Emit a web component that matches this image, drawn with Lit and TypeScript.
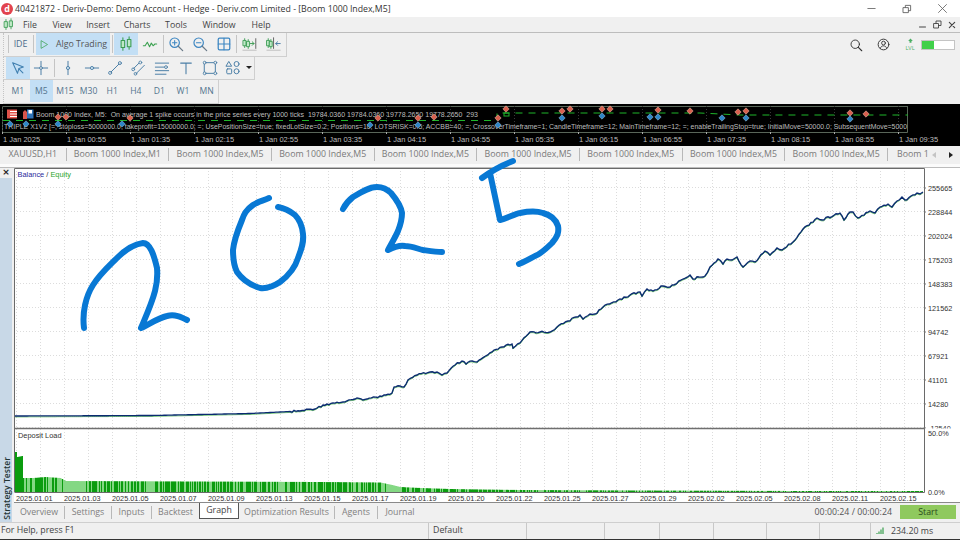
import { LitElement, html, css, svg } from "lit";
import { customElement } from "lit/decorators.js";

const BAL: number[][] = [[15,416],[150,415.5],[250,413.5],[300,411],[317,408],[323,405],[333,403],[343,402],[355,399],[367,399],[380,396],[392,393],[394,387],[400,386],[404,387],[408,380],[417,375],[430,372],[437,372],[442,375],[447,373],[455,365],[462,361],[466,364],[472,361],[477,362],[492,352],[502,347],[512,344],[513,348],[520,343],[530,332],[540,332],[550,332],[557,327],[568,321],[580,315],[583,319],[590,314],[595,314],[603,307],[618,300],[630,295],[640,292],[642,296],[647,289],[653,291],[663,286],[670,287],[683,279],[690,275],[693,279],[699,277],[705,276],[710,267],[718,259],[723,264],[727,259],[732,260],[737,257],[743,267],[750,261],[755,262],[765,251],[770,255],[777,248],[782,250],[793,242],[803,229],[817,218],[822,220],[840,213],[844,220],[850,212],[853,212],[858,218],[870,211],[875,213],[880,207],[888,204],[892,207],[897,201],[902,197],[905,200],[917,193],[920,194],[923,192]];

function rnd(i: number) {
  const v = Math.sin(i * 12.9898) * 43758.5453;
  return v - Math.floor(v);
}

function equityPath(dy: number) {
  let d = "";
  let n = 0;
  BAL.forEach((p, i) => {
    if (i === 0) { d += `M${p[0]} ${p[1] + dy}`; return; }
    const q = BAL[i - 1];
    const steps = Math.max(1, Math.floor((p[0] - q[0]) / 2));
    for (let s = 1; s <= steps; s++) {
      const t = s / steps;
      const x = q[0] + (p[0] - q[0]) * t;
      const noise = s < steps && x > 290 ? (rnd(++n) - 0.5) * 2 : 0;
      d += `L${x.toFixed(1)} ${(q[1] + (p[1] - q[1]) * t + noise + dy).toFixed(1)}`;
    }
  });
  return d;
}

const TOPS: number[][] = [[15,452],[16,452],[17,457],[22,456],[23,478],[33,478],[45,477],[60,478],[66,481],[320,482],[380,482.5],[392,485],[400,487],[420,488],[450,489],[480,489.5],[520,490],[640,490.5],[800,491],[923,491]];
function topAt(x: number) {
  for (let i = 1; i < TOPS.length; i++) {
    if (x <= TOPS[i][0]) {
      const a = TOPS[i - 1], b = TOPS[i];
      return a[1] + ((b[1] - a[1]) * (x - a[0])) / Math.max(1, b[0] - a[0]);
    }
  }
  return 491;
}
function loadBars() {
  let dark = "", light = "";
  for (let x = 15; x < 923; x++) {
    const seg = `M${x + 0.5} ${topAt(x).toFixed(1)}V492`;
    const lightZone = (x > 62 && x < 82) || (x > 145 && x < 155) || (x > 385 && x < 402);
    if (!lightZone && (x < 24 || rnd(x) > 0.45)) dark += seg;
    else light += seg;
  }
  return { dark, light };
}

const DATES = ["01.01","01.03","01.05","01.07","01.09","01.13","01.15","01.17","01.19","01.20","01.22","01.25","01.27","01.29","02.02","02.05","02.08","02.11","02.15"];
const AXIS = ["255665","228844","202024","175203","148383","121562","94742","67921","41101","14280","-12540"];
const MINI_TIMES = ["1 Jan 2025","1 Jan 00:55","1 Jan 01:35","1 Jan 02:15","1 Jan 02:55","1 Jan 03:35","1 Jan 04:15","1 Jan 04:55","1 Jan 05:35","1 Jan 06:15","1 Jan 06:55","1 Jan 07:35","1 Jan 08:15","1 Jan 08:55","1 Jan 09:35"];
const RED = [[58,117],[66,117],[130,118],[378,118],[418,118],[434,117],[498,118],[506,109],[562,111],[570,109],[602,109],[610,109],[658,110],[690,111],[738,112],[746,111],[850,113],[866,114]];
const BLUE = [[10,124],[26,124],[58,124],[122,124],[370,125],[418,125],[498,125],[562,118],[602,116],[650,117],[658,117],[722,118],[746,118],[850,119]];

const icon = (body: unknown, w = 16, h = 16) =>
  html`<svg class="ic" width=${w} height=${h} viewBox="0 0 18 18" fill="none" stroke-linecap="round" stroke-linejoin="round">${body}</svg>`;

const candles = (c: string) => svg`<g stroke=${c} stroke-width="1.2" fill="#bfe8c6"><path d="M5.5 2v14M12.5 1v14"/><rect x="3.5" y="5" width="4" height="8"/><rect x="10.5" y="4" width="4" height="8"/></g>`;
const BG = "#4a7ea6";

const ICONS: Record<string, unknown> = {
  candles: candles("#3a9c52"),
  wave: svg`<path d="M1.5 11h2l2.5-4 2.5 5 2-4 2 3 2-2h2" stroke="#3aa04f" stroke-width="1.2"/>`,
  zin: svg`<circle cx="7.5" cy="7.5" r="5.3" stroke="#3c86c2" stroke-width="1.3"/><path d="M11.5 11.5l5 5" stroke="#6a7a88" stroke-width="1.4"/><path d="M5 7.5h5M7.5 5v5" stroke="#3c86c2" stroke-width="1.2"/>`,
  zout: svg`<circle cx="7.5" cy="7.5" r="5.3" stroke="#3c86c2" stroke-width="1.3"/><path d="M11.5 11.5l5 5" stroke="#6a7a88" stroke-width="1.4"/><path d="M5 7.5h5" stroke="#3c86c2" stroke-width="1.2"/>`,
  grid: svg`<rect x="2.5" y="2.5" width="13" height="13" rx="1.5" stroke="#3c86c2" stroke-width="1.4"/><path d="M9 2.5v13M2.5 9h13" stroke="#3c86c2" stroke-width="1.3"/>`,
  shiftR: svg`<g stroke="#3a9c52" stroke-width="1" fill="#bfe8c6"><path d="M3 3v10M7 4v10"/><rect x="1.5" y="5" width="3" height="6"/><rect x="5.5" y="6" width="3" height="6"/></g><path d="M9.5 8.5h4M11.5 6.5l2 2-2 2" stroke="#3a9c52" stroke-width="1.1"/><path d="M15.5 3v11" stroke="#555" stroke-width="1"/><path d="M1 16h15" stroke="#bbb" stroke-width="1"/>`,
  shiftL: svg`<g stroke="#3a9c52" stroke-width="1" fill="#bfe8c6"><path d="M2.5 3v10M5.5 4v10"/><rect x="1" y="5" width="3" height="6"/><rect x="4" y="6" width="3" height="6"/></g><path d="M8.5 2v12" stroke="#555" stroke-width="1"/><path d="M11 8.5h5M13 6.5l-2 2 2 2" stroke="#4a7ea6" stroke-width="1.1"/><path d="M1 16h15" stroke="#bbb" stroke-width="1"/>`,
  cursor: svg`<path d="M3 3l12 5-5 1.6L8.4 15z" stroke="#3f7fb0" stroke-width="1.2"/><path d="M10 10l4.5 4.5" stroke="#3f7fb0" stroke-width="1.2"/>`,
  cross: svg`<path d="M9 1.5v15M1.5 9h15" stroke=${BG} stroke-width="1.1"/><circle cx="9" cy="9" r="1.6" fill="#f0f0f0" stroke=${BG}/>`,
  vline: svg`<path d="M9 1.5v15" stroke=${BG} stroke-width="1.1"/><circle cx="9" cy="9" r="1.8" fill="#cfe2f0" stroke=${BG}/>`,
  hline: svg`<path d="M1.5 9h15" stroke=${BG} stroke-width="1.1"/><circle cx="9" cy="9" r="1.8" fill="#cfe2f0" stroke=${BG}/>`,
  trend: svg`<path d="M4.5 13.5l9-9" stroke=${BG} stroke-width="1.1"/><circle cx="3.5" cy="14.5" r="1.7" stroke=${BG}/><circle cx="14.5" cy="3.5" r="1.7" stroke=${BG}/>`,
  equi: svg`<path d="M3 9.5l6-6M6 15l9-9" stroke=${BG} stroke-width="1.1"/><circle cx="10.5" cy="2.8" r="1.6" stroke=${BG}/><circle cx="2.5" cy="10.5" r="1.6" stroke=${BG}/><circle cx="5" cy="15.5" r="1.5" stroke=${BG}/>`,
  fib: svg`<path d="M1.5 3.5h15M1.5 8h10M1.5 12h15M1.5 16h12" stroke=${BG} stroke-width="1.1"/><circle cx="13.5" cy="8" r="1.6" stroke=${BG}/>`,
  text: svg`<path d="M3 3.5h12M9 3.5v12" stroke=${BG} stroke-width="1.2"/>`,
  rect: svg`<rect x="3" y="3" width="12" height="12" stroke=${BG} stroke-width="1.1"/><g fill="#f0f0f0" stroke=${BG}><circle cx="3" cy="3" r="1.6"/><circle cx="15" cy="3" r="1.6"/><circle cx="3" cy="15" r="1.6"/><circle cx="15" cy="15" r="1.6"/></g>`,
  shapes: svg`<g stroke=${BG} stroke-width="1.1"><path d="M4.5 2l3 5h-6z"/><circle cx="13" cy="4.5" r="2.8"/><rect x="2" y="10" width="5.5" height="5.5" rx="1"/><circle cx="13" cy="12.7" r="2.8"/></g>`,
  search: svg`<circle cx="8" cy="8" r="5.4" stroke="#333" stroke-width="1.2"/><path d="M12 12l4.4 4.4" stroke="#333" stroke-width="1.4"/>`,
  user: svg`<circle cx="9" cy="9" r="7.4" stroke="#333" stroke-width="1.3"/><circle cx="9" cy="7" r="2.6" stroke="#333" stroke-width="1.2"/><path d="M4.5 14.5c.8-2.8 2.6-3.6 4.5-3.6s3.7.8 4.5 3.6" stroke="#333" stroke-width="1.2"/>`,
};

@customElement("app-root")
export class AppRoot extends LitElement {
  static styles = css`
    :host { display: block; position: relative; width: 960px; height: 540px; overflow: hidden; background: #f0f0f0;
      font-family: "Open Sans", "Noto Sans", sans-serif; color: #444; font-size: 8.8px; }
    .page { display: flex; flex-direction: column; width: 960px; height: 540px; }
    .ic { display: block; flex: none; }

    .title { height: 17px; background: #fff; display: flex; align-items: center; flex: none; }
    .logo { width: 12px; height: 12px; margin: 0 2px 0 1px; border-radius: 50%; background: #e2434e; color: #fff;
      font-size: 9px; font-weight: 700; line-height: 11px; text-align: center; }
    .title-text { flex: 1; font-size: 8.75px; color: #333; white-space: nowrap; }
    .win { display: flex; align-items: center; }
    .wbtn { width: 35px; display: flex; justify-content: center; }
    .wbtn.last { width: 36px; }

    .menu { height: 15px; flex: none; display: flex; align-items: center; background: #f0f0f0; border-bottom: 1px solid #bdbdbd; }
    .menu-logo { width: 14px; margin: 0 3px 0 2px; }
    .menu-items { display: flex; flex: 1; }
    .menu-items span { text-align: center; color: #444; font-size: 8.8px; flex: none; }
    .mwin { display: flex; align-items: center; margin-right: 1px; }
    .mbtn { width: 14.5px; display: flex; justify-content: center; }

    .row { height: 23.5px; flex: none; display: flex; align-items: center; justify-content: space-between; }
    .tb { display: flex; align-items: center; height: 23.5px; margin-left: 3px; border-left: 1px dotted #c4c4c4; border-right: 1px solid #cfcfcf; border-bottom: 1px solid #cfcfcf; box-sizing: border-box; flex: none; }
    .tb1 { width: 284px; padding-left: 4px; }
    .tb2 { width: 252px; padding-left: 2px; }
    .tb3 { width: 216px; padding-left: 2px; }
    .sep { width: 1px; height: 18px; background: #c4c4c4; flex: none; margin: 0 1px; }
    .sep.flush { margin: 0; }
    .btn { width: 23.6px; height: 22px; display: flex; align-items: center; justify-content: center; flex: none; color: #52748e; }
    .btn.on { background: #c3dff5; }
    .btn.wide { width: 24px; }
    .ide { width: 23px; font-size: 8.8px; color: #4a6a8a; }
    .algo { width: 74px; gap: 6px; color: #555; font-size: 8.8px; background: #c3dff5; margin: 0 1px; }
    .tf { font-size: 8.6px; }
    .caret { width: 0; height: 0; border: 3.2px solid transparent; border-top: 3.6px solid #222; border-bottom: 0; margin-left: 1px; }
    .side { display: flex; align-items: center; margin-right: 5px; gap: 14px; }
    .lvl { display: flex; flex-direction: column; align-items: center; color: #4caf65; font-size: 5.6px; line-height: 6px; width: 12px; }
    .progress { width: 34px; height: 10px; box-sizing: border-box; border: 1px solid #c4c4c4; background: #fff; margin-left: -9px; }
    .progress i { display: block; height: 100%; width: 38%; background: #41d04a; }

    .mini { display: block; flex: none; background: #000; }
    .mini text { font-family: "Liberation Sans", sans-serif; font-size: 7.5px; fill: #bdbdbd; white-space: pre; }

    .tabs { height: 18px; flex: none; display: flex; align-items: center; overflow: hidden; }
    .tab { flex: none; width: 102.7px; box-sizing: border-box; height: 13px; line-height: 13px; border-right: 1px solid #b8b8b8; text-align: center; color: #7a7a7a; font-size: 8.8px; white-space: nowrap; }
    .tab.first { width: 66.5px; }
    .tab.last { width: 42px; border: 0; overflow: hidden; text-align: left; padding-left: 9px; }
    .arrows { display: flex; align-items: center; gap: 13px; margin-left: 2px; }
    .arr { width: 0; height: 0; border: 3px solid transparent; }
    .arr.l { border-right: 4px solid #c4c4c4; border-left: 0; }
    .arr.r { border-left: 4px solid #222; border-right: 0; }

    .gap { height: 4px; flex: none; background: #fbfbfb; border-bottom: 1px solid #bcbcbc; box-sizing: border-box; }
    .body { display: flex; flex: none; height: 354px; }
    .strip { width: 14px; flex: none; display: flex; flex-direction: column; }
    .close { height: 10px; flex: none; font: 700 9px/9px "DejaVu Sans", sans-serif; color: #222; text-align: center; padding-right: 2px; }
    .tester { flex: 1; width: 12px; background: #c8d8e7; display: flex; flex-direction: column; justify-content: flex-end; align-items: center; }
    .tester span { writing-mode: vertical-rl; transform: rotate(180deg); font-size: 8.6px; color: #233; font-weight: 600; margin-bottom: 2px; margin-left: 1px; white-space: nowrap; }
    .content { flex: 1; display: flex; flex-direction: column; min-width: 0; }
    .plot { display: block; flex: none; background: #fff; }
    .plot text { font-family: "Liberation Sans", sans-serif; font-size: 7.3px; fill: #333; }
    .plot text.lab { font-size: 7.4px; }
    .plot .bal { fill: #2a2a9c; }
    .plot .eq { fill: #2aa52a; }

    .bottom { height: 19px; flex: none; display: flex; align-items: center; }
    .bt { flex: none; height: 13px; line-height: 13px; text-align: center; color: #808080; font-size: 8.8px; border-right: 1px solid #b8b8b8; box-sizing: border-box; white-space: nowrap; }
    .bt.active { height: 16px; line-height: 13px; background: #fff; border: 1px solid #555; border-top: 0; color: #444; align-self: flex-start; padding-top: 1px; }
    .bt.plain { border-right: 0; }
    .w51 { width: 51px; } .w47 { width: 47px; } .w40 { width: 40px; } .w96 { width: 96px; } .w43 { width: 43px; } .w44 { width: 44px; }
    .spacer { flex: 1; }
    .time { color: #555; font-size: 8.8px; margin-right: 8px; white-space: nowrap; }
    .start { width: 56px; height: 14px; line-height: 14px; background: #8fc95e; color: #2b4a1a; text-align: center; margin-right: 4px; font-size: 8.8px; }

    .status { height: 18px; flex: none; box-sizing: border-box; border-top: 1px solid #cfcfcf; border-bottom: 1px solid #333; display: flex; align-items: center; color: #444; font-size: 8.8px; }
    .cell { box-sizing: border-box; height: 16px; line-height: 15px; border-right: 1px solid #c8c8c8; flex: none; white-space: nowrap; padding-left: 4px; }
    .cell.first { padding-left: 1px; }
    .signal { display: flex; align-items: center; gap: 6px; padding-left: 5px; }

    .draw { position: absolute; left: 0; top: 0; pointer-events: none; }
  `;

  private win() {
    return html`<div class="win">
      <div class="wbtn">${icon(svg`<path d="M3 9h12" stroke="#666" stroke-width="1.4"/>`, 11, 11)}</div>
      <div class="wbtn">${icon(svg`<path d="M2.5 6.5h9v9h-9zM6 6V2.5h9.5v9.5H12" stroke="#555" stroke-width="1.5"/>`, 10, 10)}</div>
      <div class="wbtn last">${icon(svg`<path d="M2.5 2.5l13 13M15.5 2.5l-13 13" stroke="#666" stroke-width="1.4"/>`, 11, 11)}</div>
    </div>`;
  }

  private miniChart() {
    const green = "#1fb52a";
    return html`<svg class="mini" width="960" height="42" viewBox="0 104 960 42">
      <rect x="2.5" y="106.5" width="905" height="26" fill="none" stroke="#6f7f6f" stroke-width="0.8"/>
      ${[...Array(15).keys()].map((k) => svg`
        <path d="M${2.5 + k * 64} 106v26" stroke="#3a3a3a" stroke-dasharray="1 2"/>
        <path d="M${2.5 + k * 64} 132v2" stroke="#aaa"/>
        <text x=${3 + k * 64} y="142">${MINI_TIMES[k]}</text>`)}
      <path d="M3 120.5H497" stroke=${green} stroke-width="1" stroke-dasharray="7 6"/>
      <path d="M497 120.5V113H700L740 115H908" fill="none" stroke=${green} stroke-width="1" stroke-dasharray="7 6"/>
      <rect x="504" y="113" width="5" height="3" fill="none" stroke=${green}/>
      <g>
        <rect x="7" y="109.5" width="10" height="9" fill="#e0524a"/>
        <path d="M10 111.5h7M10 114h7M10 116.5h7" stroke="#fff" stroke-width="1"/>
        <path d="M23 119v-7l2-2 2 2v7z" fill="#d8554b"/>
        <rect x="27" y="109.5" width="6.5" height="9" fill="#2f74b8"/><rect x="28.5" y="110" width="3.5" height="3.5" fill="#fff"/>
      </g>
      <text x="36" y="117" textLength="442" lengthAdjust="spacingAndGlyphs">Boom 1000 Index, M5:  On average 1 spike occurs in the price series every 1000 ticks  19784.0360 19784.0360 19778.2650 19778.2650  293</text>
      <text x="4" y="129" textLength="903" lengthAdjust="spacingAndGlyphs">TRIPLE X1V2 [=; stoploss=5000000.0; takeprofit=15000000.0; =; UsePositionSize=true; fixedLotSize=0.2; Positions=10; LOTSRISK=0.5; ACCBB=40; =; CrossoverTimeframe=1; CandleTimeframe=12; MainTimeframe=12; =; enableTrailingStop=true; InitialMove=50000.0; SubsequentMove=5000</text>
      ${RED.map(([x, y]) => svg`<path d="M${x} ${y - 3.2}l3.2 3.2-3.2 3.2-3.2-3.2z" fill="#d9604f" stroke="#ecc0b0" stroke-width="0.5"/>`)}
      ${BLUE.map(([x, y]) => svg`<path d="M${x} ${y - 3.2}l3.2 3.2-3.2 3.2-3.2-3.2z" fill="#2f86c8" stroke="#9cc4e0" stroke-width="0.5"/>`)}
    </svg>`;
  }

  private plot() {
    const { dark, light } = loadBars();
    const xs = [...Array(38).keys()].map((k) => 16 + 24 * k);
    const ys = [...Array(11).keys()].map((k) => 187.5 + 24 * k);
    return html`<svg class="plot" width="946" height="335" viewBox="14 168 946 335">
      <g stroke="#dcdcdc" stroke-dasharray="1 2" stroke-width="1">
        ${xs.map((x) => svg`<path d="M${x + 0.5} 168V492"/>`)}
        ${ys.map((y) => svg`<path d="M14 ${y}H924"/>`)}
      </g>
      <path d=${light} stroke="#84d884" stroke-width="1"/>
      <path d=${dark} stroke="#0b9c0f" stroke-width="1"/>
      <path d=${equityPath(0.9)} fill="none" stroke="#3cad3c" stroke-width="0.9" opacity="0.8"/>
      <path d=${equityPath(0)} fill="none" stroke="#0a2a70" stroke-width="1.35"/>
      <path d="M14.5 492V168.5H924.5V492.5H14.5" fill="none" stroke="#6a6a6a" stroke-width="1"/>
      <path d="M14 502.5H960" stroke="#8a8a8a" stroke-width="1"/>
      <text class="lab" x="17.5" y="177"><tspan class="bal">Balance</tspan><tspan> / </tspan><tspan class="eq">Equity</tspan></text>
      <text class="lab" x="18" y="438">Deposit Load</text>
      ${AXIS.map((t, i) => svg`<path d="M924 ${188 + i * 24}h2" stroke="#777"/><text x="928" y=${190.5 + i * 24}>${t}</text>`)}
      <rect x="925" y="428.5" width="35" height="8" fill="#fff"/>
      <path d="M14 428.5H924" stroke="#6f6f6f" stroke-width="1.4"/>
      <text x="928" y="436">50.0%</text>
      <text x="928" y="495">0.0%</text>
      ${DATES.map((d, i) => svg`<text x=${16 + i * 48} y="501">2025.${d}</text>`)}
    </svg>`;
  }

  render() {
    const menu: [string, number][] = [["File", 22], ["View", 42], ["Insert", 30], ["Charts", 48], ["Tools", 30], ["Window", 56], ["Help", 28]];
    const tfs = ["M1", "M5", "M15", "M30", "H1", "H4", "D1", "W1", "MN"];
    const tools2 = ["vline", "hline", "trend", "equi", "fib", "text", "rect", "shapes"];
    const statusCells: [string, number][] = [["For Help, press F1", 429], ["Default", 98], ["", 78], ["", 55], ["", 54], ["", 53], ["", 53], ["", 51]];
    return html`<div class="page">
      <div class="title">
        <div class="logo">d</div>
        <div class="title-text">40421872 - Deriv-Demo: Demo Account - Hedge - Deriv.com Limited - [Boom 1000 Index,M5]</div>
        ${this.win()}
      </div>
      <div class="menu">
        <div class="menu-logo">${icon(candles("#3a9c52"), 13, 13)}</div>
        <div class="menu-items">${menu.map((m) => html`<span style="width:${m[1]}px">${m[0]}</span>`)}</div>
        <div class="mwin">
          <div class="mbtn">${icon(svg`<path d="M3 14h12" stroke="#444" stroke-width="2"/>`, 9, 9)}</div>
          <div class="mbtn">${icon(svg`<path d="M2 7h9v9H2zM6 7V2h10v9h-5" stroke="#444" stroke-width="1.8"/>`, 9, 9)}</div>
          <div class="mbtn">${icon(svg`<path d="M3 3l12 12M15 3L3 15" stroke="#444" stroke-width="2.6"/>`, 8, 8)}</div>
        </div>
      </div>
      <div class="row">
        <div class="tb tb1">
          <div class="sep flush"></div>
          <div class="btn ide">IDE</div>
          <div class="sep"></div>
          <div class="btn algo">${icon(svg`<path d="M4 3l10 6-10 6z" stroke="#3aa04f" stroke-width="1.2"/>`, 11, 11)}<span>Algo Trading</span></div>
          <div class="sep"></div>
          <div class="btn on">${icon(ICONS.candles)}</div>
          <div class="btn wide">${icon(ICONS.wave)}</div>
          <div class="sep"></div>
          <div class="btn">${icon(ICONS.zin)}</div>
          <div class="btn">${icon(ICONS.zout)}</div>
          <div class="btn">${icon(ICONS.grid)}</div>
          <div class="sep"></div>
          <div class="btn">${icon(ICONS.shiftR)}</div>
          <div class="btn">${icon(ICONS.shiftL)}</div>
        </div>
        <div class="side">
          ${icon(ICONS.search, 14, 14)}
          ${icon(ICONS.user, 13, 13)}
          <div class="lvl">${icon(svg`<path d="M9 1l6 7h-3.5v4h-5V8H3z" fill="#4caf65"/>`, 9, 7)}<span>LVL</span></div>
          <div class="progress"><i></i></div>
        </div>
      </div>
      <div class="row">
        <div class="tb tb2">
          <div class="btn on">${icon(ICONS.cursor)}</div>
          <div class="btn">${icon(ICONS.cross)}</div>
          <div class="sep"></div>
          ${tools2.map((t) => html`<div class="btn">${icon(ICONS[t])}</div>`)}
          <div class="caret"></div>
        </div>
      </div>
      <div class="row">
        <div class="tb tb3">
          ${tfs.map((t) => html`<div class="btn tf ${t === "M5" ? "on" : ""}">${t}</div>`)}
        </div>
      </div>
      ${this.miniChart()}
      <div class="tabs">
        <div class="tab first">XAUUSD,H1</div>
        <div class="tab">Boom 1000 Index,M1</div>
        ${[0, 1, 2, 3, 4, 5, 6].map(() => html`<div class="tab">Boom 1000 Index,M5</div>`)}
        <div class="tab last">Boom 1</div>
        <div class="arrows"><div class="arr l"></div><div class="arr r"></div></div>
      </div>
      <div class="gap"></div>
      <div class="body">
        <div class="strip">
          <div class="close">×</div>
          <div class="tester"><span>Strategy Tester</span></div>
        </div>
        <div class="content">
          ${this.plot()}
          <div class="bottom">
            <div class="bt w51">Overview</div>
            <div class="bt w47">Settings</div>
            <div class="bt w40">Inputs</div>
            <div class="bt plain w47">Backtest</div>
            <div class="bt active w40">Graph</div>
            <div class="bt w96">Optimization Results</div>
            <div class="bt w43">Agents</div>
            <div class="bt plain w44">Journal</div>
            <div class="spacer"></div>
            <div class="time">00:00:24 / 00:00:24</div>
            <div class="start">Start</div>
          </div>
        </div>
      </div>
      <div class="status">
        ${statusCells.map(([t, w], i) => html`<div class="cell ${i === 0 ? "first" : ""}" style="width:${w}px">${t}</div>`)}
        <div class="signal">
          ${icon(svg`<path d="M2 16v-2M6 16v-5M10 16V7M14 16V3" stroke="#3aa04f" stroke-width="2.4" stroke-linecap="butt"/>`, 9, 9)}
          <span>234.20 ms</span>
        </div>
      </div>
    </div>
    <svg class="draw" width="960" height="540" viewBox="0 0 960 540" fill="none" stroke="#0878d4" stroke-width="6" stroke-linecap="round" stroke-linejoin="round">
      <path d="M84 328C82 312 86 296 93 285C100 274 108 267 117 258C126 249 135 244 143 243C150 243 154 255 157 268C158 280 156 287 155 291C152 303 146 316 141 328C148 325 158 318 167 316C175 314 181 317 187 320"/>
      <path d="M269 198C262 201 257 202 253 205C246 210 244 214 242 220C237 232 234 240 233 250C233 260 234 266 237 272C242 279 250 285 260 288C268 289 274 286 280 282C288 276 295 268 298 258C301 250 304 243 303 234C302 224 299 219 295 215C290 211 284 208 278 207"/>
      <path d="M343 209C346 203 349 200 353 197C361 192 369 187 377 187C383 187 387 189 391 193C396 199 401 206 402 213C402 221 400 226 398 231C395 238 391 244 388 250C394 247 400 245 405 246C412 246 418 249 423 250C430 251 436 252 442 252"/>
      <path d="M482 178C490 172 500 166 513 161M490 173L500 220C508 218 514 214 520 213C530 211 537 211 543 213C551 215 556 220 558 226C559 232 558 236 552 243C546 249 540 254 535 256C528 260 524 262 519 264"/>
    </svg>`;
  }
}

declare global { interface HTMLElementTagNameMap { "app-root": AppRoot; } }
